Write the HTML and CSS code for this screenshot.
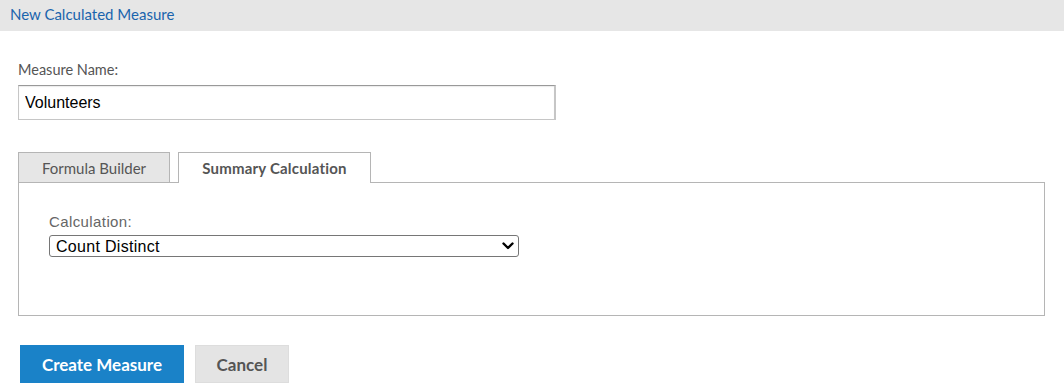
FILE: index.html
```html
<!DOCTYPE html>
<html lang="en">
<head>
    <meta charset="UTF-8">
    <title>New Calculated Measure</title>
    <link rel="stylesheet" href="styles.css">
</head>
<body>
    <div class="dialog-title">New Calculated Measure</div>
    <div class="dialog-body">
        <label class="field-label" for="measure-name">Measure Name:</label>
        <input id="measure-name" class="text-input" type="text" value="Volunteers">

        <div class="tabs">
            <div class="tab">Formula Builder</div>
            <div class="tab active">Summary Calculation</div>
        </div>
        <div class="tab-panel">
            <label class="calc-label" for="calc">Calculation:</label>
            <div class="select-wrap">
                <select id="calc" class="select">
                    <option>Count Distinct</option>
                    <option>Count</option>
                    <option>Sum</option>
                </select>
                <svg class="chevron" width="12" height="8" viewBox="0 0 12 8">
                    <path d="M1.5 1.5 L6 6 L10.5 1.5" fill="none" stroke="#000" stroke-width="2.4" stroke-linecap="round" stroke-linejoin="round"/>
                </svg>
            </div>
        </div>

        <div class="actions">
            <button class="btn btn-primary">Create Measure</button>
            <button class="btn btn-cancel">Cancel</button>
        </div>
    </div>
</body>
</html>
```

FILE: styles.css
```css
html, body {
    margin: 0;
    padding: 0;
    background: #fff;
    font-family: 'Lato', sans-serif;
}

.dialog-title {
    height: 31px;
    line-height: 29px;
    background: #e6e6e6;
    color: #1a64ad;
    font-size: 15px;
    padding-left: 10px;
}

.dialog-body {
    padding: 29px 18px 0;
}

.field-label {
    display: block;
    color: #555;
    font-size: 14.5px;
    line-height: 20px;
    margin-bottom: 5px;
}

.text-input {
    display: block;
    box-sizing: border-box;
    width: 538px;
    height: 35px;
    margin: 0;
    padding: 0 6px;
    border: 1px solid #c6c6c6;
    border-top-color: #999;
    border-right-width: 2px;
    box-shadow: inset 0 1px 1px rgba(0, 0, 0, 0.08);
    font-family: 'Liberation Sans', Arial, sans-serif;
    font-size: 16px;
    color: #000;
    outline: none;
}

.tabs {
    display: flex;
    gap: 8px;
    margin-top: 32px;
    height: 30px;
}

.tab {
    box-sizing: border-box;
    width: 152px;
    height: 30px;
    background: #e6e6e6;
    border: 1px solid #b5b5b5;
    border-bottom: none;
    color: #555;
    font-size: 15px;
    line-height: 30px;
    text-align: center;
}

.tab.active {
    width: 193px;
    height: 31px;
    background: #fff;
    font-weight: bold;
    letter-spacing: 0.2px;
    position: relative;
    z-index: 1;
}

.tab-panel {
    box-sizing: border-box;
    width: 1027px;
    height: 134px;
    border: 1px solid #b5b5b5;
    padding: 30px 30px 0;
}

.calc-label {
    display: block;
    font-family: 'Liberation Sans', Arial, sans-serif;
    font-size: 15px;
    color: #666;
    line-height: 18px;
    letter-spacing: 0.4px;
    margin-bottom: 4px;
}

.select-wrap {
    position: relative;
    width: 470px;
}

.select {
    -webkit-appearance: none;
    appearance: none;
    display: block;
    box-sizing: border-box;
    width: 470px;
    height: 22px;
    margin: 0;
    padding: 0 6px;
    border: 1px solid #767676;
    border-radius: 3px;
    background: #fff;
    font-family: 'Liberation Sans', Arial, sans-serif;
    font-size: 16px;
    letter-spacing: 0.3px;
    color: #000;
}

.chevron {
    position: absolute;
    right: 5px;
    top: 7px;
    pointer-events: none;
}

.actions {
    display: flex;
    gap: 11px;
    margin-top: 29px;
    padding-left: 2px;
}

.btn {
    height: 38px;
    border: none;
    border-radius: 0;
    font-family: 'Lato', sans-serif;
    font-size: 17px;
    font-weight: bold;
    cursor: pointer;
}

.btn-primary {
    width: 164px;
    background: #1a82c8;
    color: #fff;
}

.btn-cancel {
    width: 94px;
    background: #e4e4e4;
    color: #555;
    border: 1px solid #ddd;
}
```
